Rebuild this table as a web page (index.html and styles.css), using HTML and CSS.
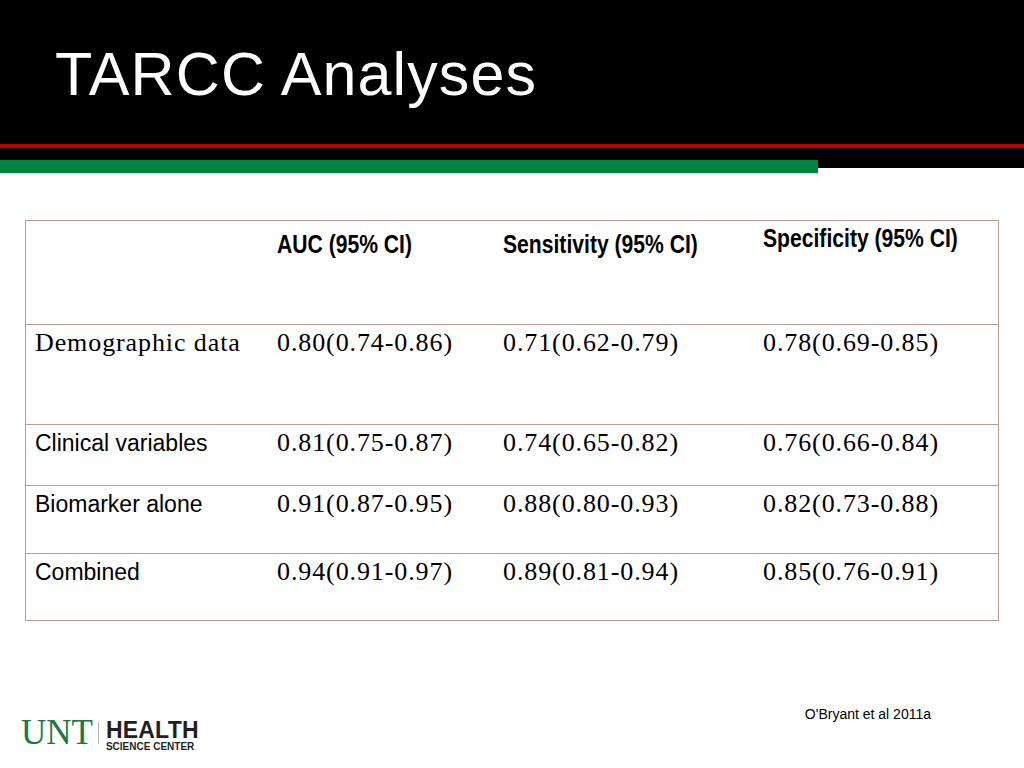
FILE: index.html
```html
<!DOCTYPE html>
<html lang="en">
<head>
<meta charset="utf-8">
<title>TARCC Analyses</title>
<link rel="stylesheet" href="styles.css">
</head>
<body>
<header class="header">
  <h1 class="title">TARCC Analyses</h1>
  <div class="red-line"></div>
</header>
<div class="stripe">
  <div class="stripe-green"></div>
  <div class="stripe-black"></div>
</div>
<main class="content">
  <div class="table">
    <div class="row row-head">
      <div class="cell"></div>
      <div class="cell th"><span class="narrow">AUC (95% CI)</span></div>
      <div class="cell th"><span class="narrow">Sensitivity (95% CI)</span></div>
      <div class="cell th th-high"><span class="narrow">Specificity (95% CI)</span></div>
    </div>
    <div class="row row-1">
      <div class="cell serif">Demographic data</div>
      <div class="cell serif">0.80(0.74-0.86)</div>
      <div class="cell serif">0.71(0.62-0.79)</div>
      <div class="cell serif">0.78(0.69-0.85)</div>
    </div>
    <div class="row row-2">
      <div class="cell sans">Clinical variables</div>
      <div class="cell serif">0.81(0.75-0.87)</div>
      <div class="cell serif">0.74(0.65-0.82)</div>
      <div class="cell serif">0.76(0.66-0.84)</div>
    </div>
    <div class="row row-3">
      <div class="cell sans">Biomarker alone</div>
      <div class="cell serif">0.91(0.87-0.95)</div>
      <div class="cell serif">0.88(0.80-0.93)</div>
      <div class="cell serif">0.82(0.73-0.88)</div>
    </div>
    <div class="row row-4">
      <div class="cell sans">Combined</div>
      <div class="cell serif">0.94(0.91-0.97)</div>
      <div class="cell serif">0.89(0.81-0.94)</div>
      <div class="cell serif">0.85(0.76-0.91)</div>
    </div>
  </div>
</main>
<footer class="footer">
  <div class="logo">
    <span class="logo-unt">UNT</span>
    <span class="logo-sep"></span>
    <span class="logo-words">
      <span class="logo-health">HEALTH</span>
      <span class="logo-sci">SCIENCE CENTER</span>
    </span>
  </div>
  <div class="citation">O'Bryant et al 2011a</div>
</footer>
</body>
</html>
```
FILE: styles.css
```css
html, body {
  margin: 0;
  padding: 0;
  background: #ffffff;
}
body {
  width: 1024px;
  height: 768px;
  overflow: hidden;
  font-family: "Liberation Sans", Arial, sans-serif;
  color: #000;
}
.header {
  background: #000;
  height: 160px;
  padding-top: 39px;
  box-sizing: border-box;
}
.title {
  margin: 0 0 0 55px;
  font-family: "Liberation Sans", Arial, sans-serif;
  font-weight: normal;
  font-size: 61px;
  letter-spacing: 1.1px;
  line-height: 70px;
  color: #fff;
}
.red-line {
  margin-top: 35px;
  height: 4px;
  background: #c00000;
}
.stripe {
  display: flex;
  align-items: flex-start;
}
.stripe-green {
  width: 818px;
  height: 13px;
  background: #00853f;
}
.stripe-black {
  flex: 1;
  height: 8px;
  background: #000;
}
.content {
  padding: 47px 0 0 25px;
}
.table {
  width: 974px;
  box-sizing: border-box;
  border: 1px solid #bf9a92;
}
.row {
  display: grid;
  grid-template-columns: 242px 226px 260px 1fr;
  border-top: 1px solid #bf9a92;
  box-sizing: border-box;
}
.row-head { border-top: none; height: 103px; }
.row-1 { height: 100px; }
.row-2 { height: 61px; }
.row-3 { height: 68px; }
.row-4 { height: 67px; }
.cell {
  padding: 3px 0 0 9px;
  white-space: nowrap;
}
.th {
  padding-top: 8px;
  font-family: "Liberation Sans", Arial, sans-serif;
  font-weight: bold;
  font-size: 25px;
  line-height: 30px;
}
.narrow {
  display: inline-block;
  transform: scaleX(0.845);
  transform-origin: left center;
}
.th-high { padding-top: 2px; }
.serif {
  font-family: "Liberation Serif", "Times New Roman", serif;
  font-size: 26px;
  letter-spacing: 0.9px;
  line-height: 30px;
}
.sans {
  font-family: "Liberation Sans", Arial, sans-serif;
  font-size: 23px;
  line-height: 30px;
}
.footer {
  display: flex;
  justify-content: space-between;
  align-items: flex-start;
  padding: 0 93px 0 21px;
  margin-top: 85px;
}
.logo {
  display: flex;
  align-items: flex-start;
  margin-top: 10px;
}
.logo-unt {
  font-family: "Liberation Serif", "Times New Roman", serif;
  font-size: 35px;
  line-height: 30px;
  margin-top: 2px;
  color: #1b7a40;
}
.logo-sep {
  width: 1px;
  height: 22px;
  background: #b8b8b8;
  margin: 6px 7px 0 5px;
}
.logo-words {
  display: flex;
  flex-direction: column;
  margin-top: 4px;
}
.logo-health {
  font-family: "Liberation Sans", Arial, sans-serif;
  font-weight: bold;
  font-size: 23px;
  line-height: 20px;
  letter-spacing: 0.2px;
  color: #231f20;
}
.logo-sci {
  font-family: "Liberation Sans", Arial, sans-serif;
  font-weight: bold;
  font-size: 10px;
  line-height: 10px;
  margin-top: 2px;
  color: #231f20;
}
.citation {
  font-family: "Liberation Sans", Arial, sans-serif;
  font-size: 14px;
  line-height: 16px;
}
```
